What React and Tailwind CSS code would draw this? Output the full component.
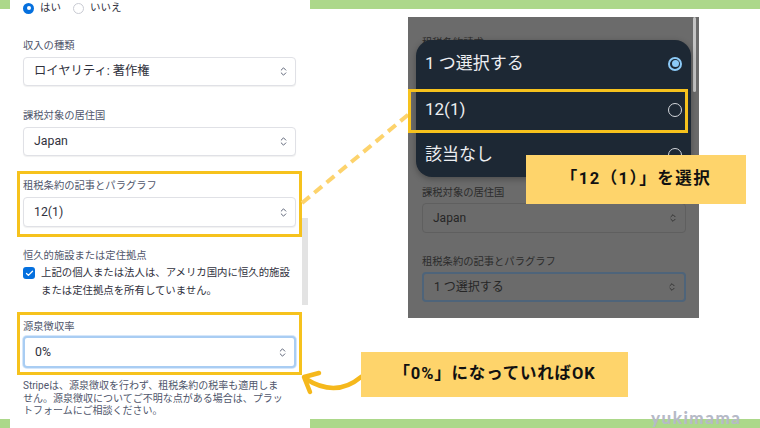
import { ChevronsUpDown, Check } from "lucide-react";

/* 共通 ------------------------------------------------------------- */
const jp = "font-['Roboto','Noto_Sans_CJK_JP',sans-serif]";

function Select({ value, focused = false, h = "h-[29px]" }) {
  return (
    <div
      className={`${h} flex items-center justify-between rounded-[4px] bg-white pl-[10px] pr-[6px] text-[12.3px] text-[#30313d] ${
        focused
          ? "border-2 border-[#a9cdf3] shadow-[0_0_0_1px_#d6e7fa]"
          : "border border-[#e0e1e6] shadow-[0_1px_1px_rgba(0,0,0,0.06)]"
      }`}
    >
      <span>{value}</span>
      <ChevronsUpDown size={11} strokeWidth={2} className="text-[#4f566b]" />
    </div>
  );
}

function Label({ children, className = "" }) {
  return (
    <p className={`text-[10.3px] leading-[14px] text-[#4f566b] ${className}`}>
      {children}
    </p>
  );
}

/* 左のスクリーンショット ------------------------------------------------- */
function FormPanel() {
  return (
    <div className="absolute left-[10px] top-0 h-[428px] w-[300px] bg-white">
      <div className="flex flex-col pl-[13px] pr-[14px]">
        {/* はい / いいえ */}
        <div className="flex h-4 items-center gap-[6px] text-[10.5px] text-[#30313d]">
          <span className="flex h-[11px] w-[11px] items-center justify-center rounded-full bg-[#0570de]">
            <span className="h-[4px] w-[4px] rounded-full bg-white" />
          </span>
          <span>はい</span>
          <span className="ml-[6px] h-[11px] w-[11px] rounded-full border border-[#c9cbd3] bg-white" />
          <span>いいえ</span>
        </div>

        <Label className="mt-[23px]">収入の種類</Label>
        <div className="mt-[4px]">
          <Select value="ロイヤリティ: 著作権" />
        </div>

        <Label className="mt-[23px]">課税対象の居住国</Label>
        <div className="mt-[4px]">
          <Select value="Japan" />
        </div>

        <div className="-mx-[6px] mt-[15px] border-[3px] border-[#f6c21d] px-[3px] pb-[7px] pt-[5px]">
          <Label>租税条約の記事とパラグラフ</Label>
          <div className="mt-[4px]">
            <Select value="12(1)" h="h-[30px]" />
          </div>
        </div>

        <Label className="mt-[12px]">恒久的施設または定住拠点</Label>
        <div className="mt-px flex gap-[6px] text-[10.4px] leading-[18px] text-[#30313d]">
          <span className="mt-[3px] flex h-[12px] w-[12px] shrink-0 items-center justify-center rounded-[3px] bg-[#0570de]">
            <Check size={9} strokeWidth={3.5} className="text-white" />
          </span>
          <p className="whitespace-nowrap">
            上記の個人または法人は、アメリカ国内に恒久的施設
            <br />
            または定住拠点を所有していません。
          </p>
        </div>

        <div className="-mx-[6px] mt-[12px] border-[3px] border-[#f6c21d] px-[3px] pb-[4px] pt-[5px]">
          <Label>源泉徴収率</Label>
          <div className="mt-[2px]">
            <Select value="0%" focused h="h-[32px]" />
          </div>
        </div>

        <p className="mt-[5px] whitespace-nowrap text-[10px] leading-[12.5px] text-[#4f566b]">
          Stripeは、源泉徴収を行わず、租税条約の税率も適用しま
          <br />
          せん。源泉徴収についてご不明な点がある場合は、プラッ
          <br />
          トフォームにご相談ください。
        </p>
      </div>

      {/* スクロールバー */}
      <div className="absolute left-[292px] top-[218px] h-[87px] w-[6px] bg-[#e3e3e3]" />
    </div>
  );
}

/* 右のスクリーンショット ------------------------------------------------- */
function Radio({ on }) {
  return on ? (
    <span className="flex h-[14px] w-[14px] items-center justify-center rounded-full border-2 border-[#8ccaf7]">
      <span className="h-[7px] w-[7px] rounded-full bg-[#8ccaf7]" />
    </span>
  ) : (
    <span className="h-[14px] w-[14px] rounded-full border-[1.5px] border-[#d4d7dc]" />
  );
}

function DimSelect({ value, focused = false }) {
  return (
    <div
      className={`flex h-[30px] items-center justify-between rounded-[4px] pl-[10px] pr-[7px] text-[12px] text-[#262626] ${
        focused ? "border-2 border-[#4e647a]" : "border border-[#5f5f5f]"
      }`}
    >
      <span>{value}</span>
      <ChevronsUpDown size={10} strokeWidth={2} className="text-[#2a2a2a]" />
    </div>
  );
}

function DropdownShot() {
  const items = [
    { label: "1 つ選択する", on: true, h: "h-[47px]" },
    { label: "12(1)", on: false, h: "h-[46px]" },
    { label: "該当なし", on: false, h: "h-[44px]" },
  ];
  return (
    <div className="absolute left-[408px] top-[17px] h-[301px] w-[291px] overflow-hidden bg-[#6b6b6b]">
      <div className="flex flex-col px-[14px] pt-[19px]">
        <Label className="!text-[#2b2b2b]">租税条約請求</Label>
        <Label className="mt-[136px] !text-[#2b2b2b]">課税対象の居住国</Label>
        <div className="mt-[3px] w-[264px]">
          <DimSelect value="Japan" />
        </div>
        <Label className="mt-[22px] !text-[#2b2b2b]">租税条約の記事とパラグラフ</Label>
        <div className="mt-[3px] w-[264px]">
          <DimSelect value="1 つ選択する" focused />
        </div>
      </div>

      {/* スクロールバー */}
      <div className="absolute left-[285px] top-0 h-[75px] w-[3px] rounded-full bg-[#c4c4c4]" />

      {/* ドロップダウン */}
      <div className="absolute left-[8px] top-[23px] flex h-[137px] w-[275px] flex-col rounded-[16px] bg-[#1d2834] shadow-[0_2px_6px_rgba(0,0,0,0.3)]">
        {items.map((it) => (
          <div
            key={it.label}
            className={`${it.h} flex items-center justify-between pl-[9px] pr-[9px] text-[17px] text-[#eceef1]`}
          >
            <span>{it.label}</span>
            <Radio on={it.on} />
          </div>
        ))}
      </div>
    </div>
  );
}

/* 注釈 -------------------------------------------------------------- */
function Annotations() {
  return (
    <>
      <svg
        className="pointer-events-none absolute left-0 top-0"
        width="760"
        height="428"
      >
        <line
          x1="302"
          y1="203"
          x2="409"
          y2="114"
          stroke="#fdd36c"
          strokeWidth="4"
          strokeDasharray="10 6"
        />
        <path
          d="M361 377 Q 336 398 306 379"
          fill="none"
          stroke="#f5b81c"
          strokeWidth="4.5"
          strokeLinecap="round"
        />
        <path
          d="M319 373 L 304 377 L 310 392"
          fill="none"
          stroke="#f5b81c"
          strokeWidth="4.5"
          strokeLinecap="round"
          strokeLinejoin="round"
        />
      </svg>

      <div className="absolute left-[408px] top-[89px] h-[44px] w-[280px] border-[3px] border-[#f6c21d]" />

      <div className="absolute left-[526px] top-[155px] flex h-[49px] w-[220px] items-center justify-center bg-[#fed46b] text-[16.5px] font-bold tracking-[0.09em] text-[#111]">
        「12（1）」を選択
      </div>

      <div className="absolute left-[361px] top-[352px] flex h-[45px] w-[267px] items-center justify-center bg-[#fed46b] text-[16.5px] font-bold tracking-[0.05em] text-[#111]">
        「0%」になっていればOK
      </div>

      <div className="absolute left-[651px] top-[405px] font-['Lato',sans-serif] text-[17px] font-black tracking-[1.5px] text-[#b6bac7]">
        yukimama
      </div>
    </>
  );
}

export default function App() {
  return (
    <div className={`relative h-[428px] w-[760px] overflow-hidden bg-white ${jp}`}>
      <div className="absolute left-0 top-0 h-[9px] w-full bg-[#acd88a]" />
      <div className="absolute left-0 top-[419px] h-[9px] w-full bg-[#acd88a]" />
      <FormPanel />
      <DropdownShot />
      <Annotations />
    </div>
  );
}
